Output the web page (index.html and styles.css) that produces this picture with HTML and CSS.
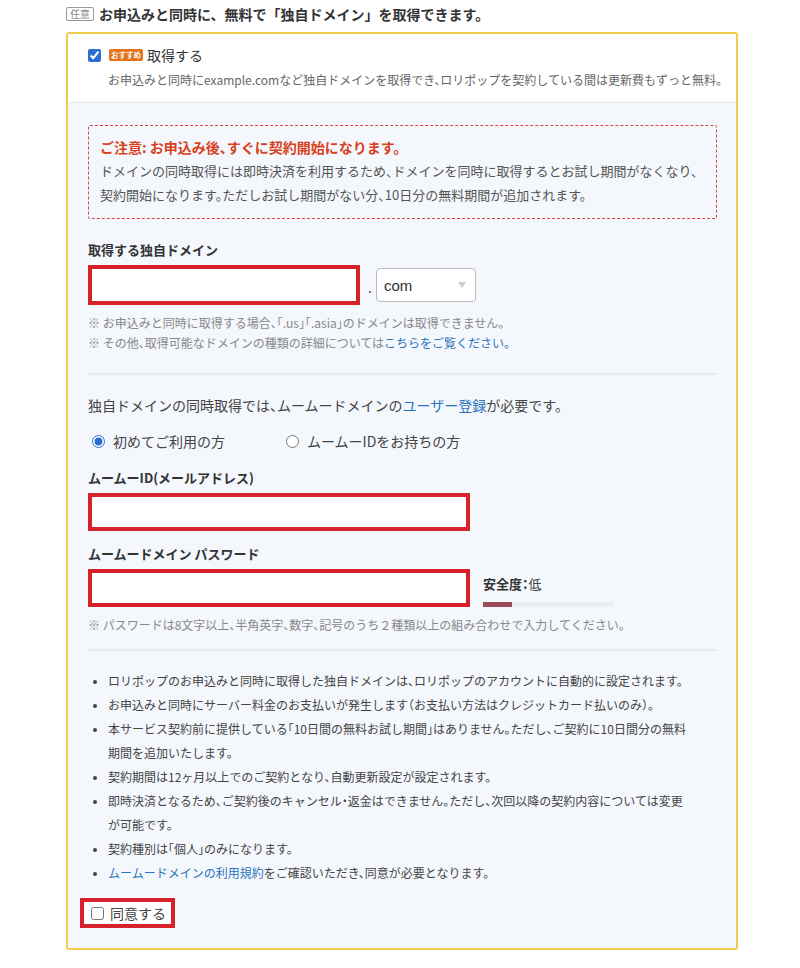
FILE: index.html
```html
<!DOCTYPE html>
<html lang="ja">
  <head>
    <meta charset="UTF-8" />
    <meta name="viewport" content="width=device-width, initial-scale=1.0" />
    <title>独自ドメイン同時取得</title>
    <link rel="stylesheet" href="styles.css">
  </head>
  <body>
    <div class="wrap">
      <h3 class="heading"><span class="tag-optional">任意</span>お申込みと同時に、無料で「独自ドメイン」を取得できます。</h3>

      <div class="domain-box">
        <div class="domain-top">
          <label class="check-row">
            <input type="checkbox" checked />
            <span class="tag-recommend">おすすめ</span>
            <span class="check-text">取得する</span>
          </label>
          <p class="desc">お申込みと同時にexample.comなど独自ドメインを取得でき、ロリポップを契約している間は更新費もずっと無料。</p>
        </div>

        <div class="domain-body">
          <div class="notice">
            <p class="notice-title">ご注意: お申込み後、すぐに契約開始になります。</p>
            <p class="notice-text">ドメインの同時取得には即時決済を利用するため、ドメインを同時に取得するとお試し期間がなくなり、契約開始になります。ただしお試し期間がない分、10日分の無料期間が追加されます。</p>
          </div>

          <label class="field-label" for="domain">取得する独自ドメイン</label>
          <div class="domain-row">
            <input type="text" id="domain" class="text-input domain-input" />
            <span class="dot">.</span>
            <span class="select-wrap">
              <select class="tld">
                <option>com</option>
                <option>net</option>
                <option>jp</option>
              </select>
            </span>
          </div>
          <p class="note">※ お申込みと同時に取得する場合、「.us」「.asia」のドメインは取得できません。</p>
          <p class="note">※ その他、取得可能なドメインの種類の詳細については<a href="#">こちらをご覧ください。</a></p>

          <hr class="sep" />

          <p class="lead">独自ドメインの同時取得では、ムームードメインの<a href="#">ユーザー登録</a>が必要です。</p>
          <div class="radio-row">
            <label class="radio first"><input type="radio" name="user" checked />初めてご利用の方</label>
            <label class="radio"><input type="radio" name="user" />ムームーIDをお持ちの方</label>
          </div>

          <label class="field-label after-radio" for="muu-id">ムームーID(メールアドレス)</label>
          <input type="text" id="muu-id" class="text-input wide-input" />

          <label class="field-label after-input" for="muu-pass">ムームードメイン パスワード</label>
          <div class="pass-row">
            <input type="password" id="muu-pass" class="text-input wide-input" />
            <div class="strength">
              <p class="strength-label"><b>安全度：</b>低</p>
              <div class="strength-bar"><span class="strength-fill" style="width: 22%"></span></div>
            </div>
          </div>
          <p class="note">※ パスワードは8文字以上、半角英字、数字、記号のうち２種類以上の組み合わせで入力してください。</p>

          <hr class="sep sep-tight" />

          <ul class="terms">
            <li>ロリポップのお申込みと同時に取得した独自ドメインは、ロリポップのアカウントに自動的に設定されます。</li>
            <li>お申込みと同時にサーバー料金のお支払いが発生します（お支払い方法はクレジットカード払いのみ）。</li>
            <li>本サービス契約前に提供している「10日間の無料お試し期間」はありません。ただし、ご契約に10日間分の無料期間を追加いたします。</li>
            <li>契約期間は12ヶ月以上でのご契約となり、自動更新設定が設定されます。</li>
            <li>即時決済となるため、ご契約後のキャンセル・返金はできません。ただし、次回以降の契約内容については変更が可能です。</li>
            <li>契約種別は「個人」のみになります。</li>
            <li><a href="#">ムームードメインの利用規約</a>をご確認いただき、同意が必要となります。</li>
          </ul>

          <label class="agree"><input type="checkbox" />同意する</label>
        </div>
      </div>
    </div>
  </body>
</html>
```

FILE: styles.css
```css
body {
  margin: 0;
  font-family: "Noto Sans CJK JP", "Liberation Sans", sans-serif;
  font-feature-settings: "halt";
  color: #333;
  background: #fff;
}

p {
  margin: 0;
}

a {
  color: #2a73bd;
  text-decoration: none;
}

.wrap {
  width: 672px;
  margin-left: 66px;
}

.heading {
  margin: 0 0 8px;
  padding-top: 4px;
  font-size: 14px;
  line-height: 20px;
  font-weight: bold;
  font-feature-settings: normal;
  color: #333;
  display: flex;
  align-items: center;
}

.tag-optional {
  display: inline-block;
  border: 1px solid #999;
  border-radius: 2px;
  color: #888;
  font-size: 10px;
  line-height: 12px;
  padding: 0 3px;
  margin-right: 5px;
  font-weight: normal;
}

.domain-box {
  border: 2px solid #f0cb4e;
  border-radius: 3px;
  background: #f4f7fc;
}

.domain-top {
  background: #fff;
  padding: 11px 20px 12px;
  border-bottom: 1px solid #e3e8ef;
}

.check-row {
  display: flex;
  align-items: center;
  height: 20px;
}

.check-row input {
  width: 13px;
  height: 13px;
  margin: 0 8px 0 0;
  accent-color: #2a6fd4;
}

.tag-recommend {
  background: #e4731c;
  color: #fff;
  font-size: 7.5px;
  font-weight: bold;
  line-height: 12px;
  padding: 0 2px;
  border-radius: 2px;
  margin-right: 4px;
}

.check-text {
  font-size: 14px;
}

.desc {
  margin: 5px -10px 0 20px;
  font-size: 12px;
  line-height: 20px;
  color: #666;
  white-space: nowrap;
}

.domain-body {
  padding: 22px 19px 20px 20px;
}

.notice {
  border: 1px dashed #d8453a;
  border-radius: 2px;
  padding: 9px 12px 11px 11px;
}

.notice-title {
  color: #d7421e;
  font-weight: bold;
  font-size: 14px;
  line-height: 24px;
}

.notice-text {
  font-size: 13px;
  line-height: 24px;
  color: #555;
}

.field-label {
  display: block;
  font-size: 13px;
  font-weight: bold;
  line-height: 20px;
  margin-top: 21px;
  color: #333;
}

.field-label.after-radio {
  margin-top: 17px;
}

.field-label.after-input {
  margin-top: 13px;
}

.text-input {
  display: block;
  box-sizing: border-box;
  border: 4px solid #d7222e;
  background: #fff;
  outline: none;
  font-size: 14px;
  padding: 0 8px;
}

.domain-row {
  display: flex;
  align-items: center;
  margin-top: 5px;
  margin-bottom: 8px;
}

.domain-input {
  width: 272px;
  height: 40px;
}

.dot {
  margin: 4px 4px 0 8px;
  font-size: 14px;
  color: #555;
}

.select-wrap {
  position: relative;
  display: inline-block;
}

.select-wrap::after {
  content: "";
  position: absolute;
  right: 10px;
  top: 14px;
  border-left: 4px solid transparent;
  border-right: 4px solid transparent;
  border-top: 6px solid #ccc;
}

.tld {
  appearance: none;
  width: 100px;
  height: 34px;
  border: 1px solid #bbb;
  border-radius: 4px;
  background: #fff;
  font-family: "Liberation Sans", Arial, sans-serif;
  font-size: 15px;
  color: #333;
  padding: 0 7px;
}

.note {
  font-size: 12px;
  line-height: 20px;
  color: #888;
}

.sep {
  border: none;
  border-top: 2px solid #e6ebf1;
  margin: 20px 0 20px;
}

.sep-tight {
  margin: 14px 0 18px;
}

.lead {
  font-size: 14px;
  line-height: 20px;
  color: #444;
}

.radio-row {
  display: flex;
  margin-top: 16px;
  font-size: 14px;
  line-height: 20px;
  color: #444;
}

.radio {
  display: flex;
  align-items: center;
}

.radio.first {
  width: 194px;
}

.radio input {
  width: 13px;
  height: 13px;
  margin: 0 8px 0 4px;
  accent-color: #2a6fd4;
}

.wide-input {
  width: 382px;
  height: 38px;
  margin-top: 5px;
}

.pass-row {
  display: flex;
  align-items: flex-start;
  margin-bottom: 8px;
}

.strength {
  margin: 10px 0 0 13px;
}

.strength-label {
  font-size: 13px;
  line-height: 20px;
  color: #444;
}

.strength-label b {
  color: #333;
}

.strength-bar {
  width: 130px;
  height: 5px;
  background: #eceeef;
  margin-top: 8px;
}

.strength-fill {
  display: block;
  height: 5px;
  background: #9c4a5a;
}

.terms {
  margin: 0;
  padding: 0 24px 0 20px;
  font-size: 12px;
  line-height: 24px;
  color: #444;
}

.terms li::marker {
  font-size: 10px;
}

.agree {
  display: inline-flex;
  align-items: center;
  margin: 13px 0 0 -8px;
  border: 4px solid #d7222e;
  background: #fff;
  padding: 0 5px 0 7px;
  height: 22px;
  font-size: 14px;
  color: #444;
}

.agree input {
  width: 13px;
  height: 13px;
  margin: 0 6px 0 0;
}
```
